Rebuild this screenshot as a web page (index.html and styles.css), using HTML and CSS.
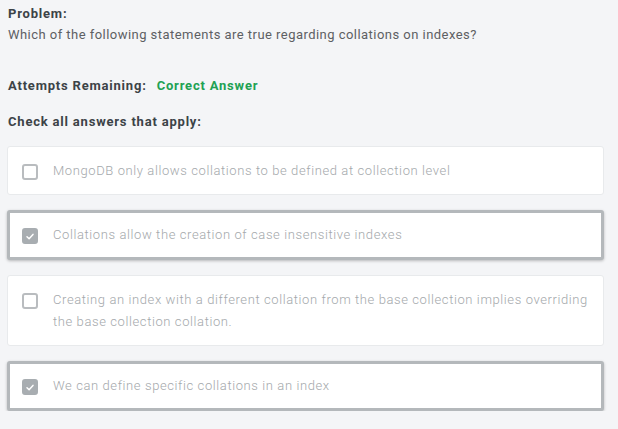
FILE: index.html
```html
<!DOCTYPE html>
<html>
<head>
<meta charset="utf-8">
<link rel="stylesheet" href="styles.css">
</head>
<body>
<div class="page">
  <div class="problem">
    <div class="label">Problem:</div>
    <div class="question">Which of the following statements are true regarding collations on indexes?</div>
  </div>
  <div class="attempts">
    <span class="label">Attempts Remaining:</span>
    <span class="correct">Correct Answer</span>
  </div>
  <div class="label instr">Check all answers that apply:</div>
  <div class="answers">
    <div class="card">
      <span class="box"></span>
      <span class="text">MongoDB only allows collations to be defined at collection level</span>
    </div>
    <div class="card selected">
      <span class="box checked"><svg viewBox="0 0 16 16" width="16" height="16"><path d="M4 8.3 L6.8 11 L12 5.2" fill="none" stroke="#fff" stroke-width="2" stroke-linecap="round" stroke-linejoin="round"/></svg></span>
      <span class="text">Collations allow the creation of case insensitive indexes</span>
    </div>
    <div class="card">
      <span class="box"></span>
      <span class="text">Creating an index with a different collation from the base collection implies overriding the base collection collation.</span>
    </div>
    <div class="card selected">
      <span class="box checked"><svg viewBox="0 0 16 16" width="16" height="16"><path d="M4 8.3 L6.8 11 L12 5.2" fill="none" stroke="#fff" stroke-width="2" stroke-linecap="round" stroke-linejoin="round"/></svg></span>
      <span class="text">We can define specific collations in an index</span>
    </div>
  </div>
</div>
</body>
</html>
```
FILE: styles.css
```css
html, body {
  margin: 0;
  padding: 0;
  background: #f4f5f7;
}
.page {
  padding: 6px 14px 0 8px;
  font-family: Roboto, "Liberation Sans", sans-serif;
  font-size: 13px;
  color: #494747;
}
.label {
  font-family: Roboto, "Liberation Sans", sans-serif;
  font-weight: 700;
  font-size: 13px;
  letter-spacing: 0.8px;
  color: #3c4347;
  line-height: 16px;
}
.question {
  margin-top: 4px;
  line-height: 18px;
  letter-spacing: 0.46px;
  color: #5d6063;
}
.attempts {
  margin-top: 34px;
  display: flex;
  gap: 10px;
  line-height: 16px;
}
.correct {
  font-family: Roboto, "Liberation Sans", sans-serif;
  font-weight: 700;
  font-size: 13px;
  letter-spacing: 0.8px;
  color: #21a153;
}
.instr {
  margin-top: 20px;
}
.answers {
  margin-top: 16px;
  margin-left: -1px;
  display: flex;
  flex-direction: column;
  gap: 15px;
}
.card {
  background: #fff;
  border: 1px solid #e8eaec;
  border-radius: 3px;
  padding: 13px 14px 12px 14px;
  display: flex;
  align-items: flex-start;
  gap: 15px;
}
.card.selected {
  border: 3px solid #b4b8bb;
  padding: 11px 12px 11px 12px;
  box-shadow: 0 1px 3px rgba(0,0,0,0.25);
}
.box {
  flex: none;
  width: 16px;
  height: 16px;
  box-sizing: border-box;
  border: 2px solid #b9bcbf;
  border-radius: 3px;
  margin-top: 4px;
  display: flex;
  align-items: center;
  justify-content: center;
}
.box.checked {
  background: #a8adb1;
  border-color: #a8adb1;
}
.box svg {
  width: 13px;
  height: 13px;
}
.text {
  font-weight: 300;
  color: #a4a8ab;
  line-height: 22px;
  letter-spacing: 0.6px;
}
```
